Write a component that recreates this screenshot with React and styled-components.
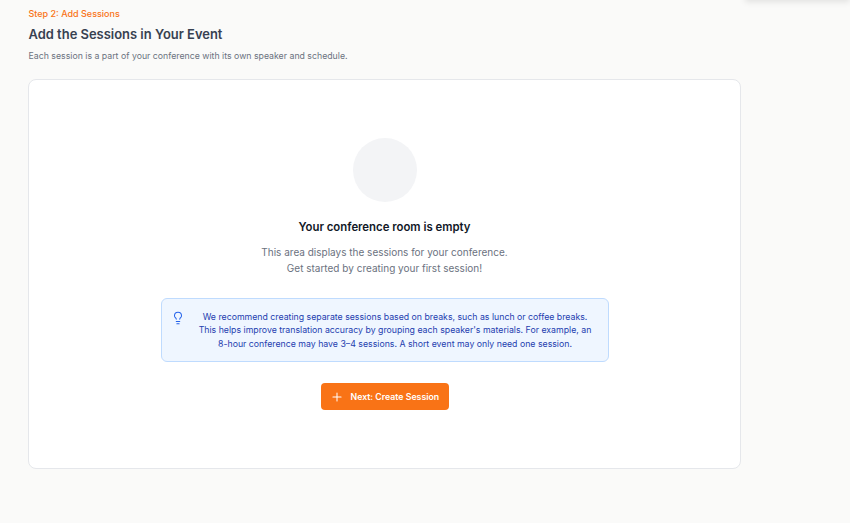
import React from 'react';
import styled, { createGlobalStyle } from 'styled-components';
import { Lightbulb, Plus } from 'lucide-react';

const GlobalStyle = createGlobalStyle`
  html, body {
    margin: 0;
    padding: 0;
    height: 100%;
    background: #fafaf9;
    overflow: hidden;
  }
  * { box-sizing: border-box; }
`;

// Page wrapper
const Page = styled.div`
  position: relative;
  width: 850px;
  height: 523px;
  padding: 8px 109px 0 28px;
  font-family: Inter, "Liberation Sans", sans-serif;
  background: #fafaf9;
  overflow: hidden;
`;

// Corner of a popup that hangs above the window
const TopShadow = styled.div`
  position: absolute;
  top: -20px;
  right: 0;
  width: 105px;
  height: 20px;
  background: #fff;
  box-shadow: 0 2px 6px rgba(0, 0, 0, 0.1);
`;

const HeaderBlock = styled.header`
  padding-left: 0.5px;
`;

const StepLabel = styled.div`
  font-size: 9px;
  line-height: 12px;
  font-weight: 500;
  color: #f97316;
`;

const Heading = styled.h1`
  margin: 6px 0 0;
  font-size: 12.95px;
  line-height: 16px;
  font-weight: 600;
  color: #374151;
`;

const SubHeading = styled.p`
  margin: 8px 0 0;
  font-size: 8.75px;
  line-height: 12px;
  color: #6b7280;
`;

// The big white card
const Card = styled.section`
  display: flex;
  flex-direction: column;
  align-items: center;
  height: 390px;
  margin-top: 17px;
  padding-top: 58px;
  background: #fff;
  border: 1px solid #e5e7eb;
  border-radius: 8px;
`;

const Circle = styled.div`
  width: 64px;
  height: 64px;
  border-radius: 50%;
  background: #f3f4f6;
`;

const EmptyTitle = styled.h2`
  margin: 16px 0 0;
  font-size: 11.375px;
  line-height: 18px;
  font-weight: 600;
  color: #111827;
`;

const EmptyText = styled.p`
  margin: 8px 0 0;
  font-size: 10px;
  line-height: 16px;
  text-align: center;
  color: #6b7280;
`;

// Blue recommendation box
const Notice = styled.div`
  display: flex;
  align-items: flex-start;
  width: 448px;
  height: 64px;
  margin-top: 22px;
  padding: 11.5px 10px 0 9px;
  background: #eff6ff;
  border: 1px solid #bfdbfe;
  border-radius: 6px;
`;

const NoticeIcon = styled(Lightbulb)`
  flex: none;
  width: 14px;
  height: 14px;
  margin-top: 0.5px;
  color: #2563eb;
`;

const NoticeText = styled.p`
  flex: 1;
  margin: 0 0 0 8px;
  font-size: 8.75px;
  line-height: 13.5px;
  text-align: center;
  white-space: nowrap;
  color: #1e40af;
`;

const NextButton = styled.button`
  display: flex;
  align-items: center;
  gap: 7px;
  width: 128px;
  height: 27px;
  margin-top: 21px;
  padding: 0 9px;
  background: #f97316;
  border: 0;
  border-radius: 4px;
  color: #fff;
  font-family: inherit;
  font-size: 8.75px;
  font-weight: 600;
  white-space: nowrap;
`;

const ButtonIcon = styled(Plus)`
  flex: none;
  width: 14px;
  height: 14px;
`;

export default function App() {
  return (
    <Page>
      <GlobalStyle />
      <TopShadow />
      <HeaderBlock>
        <StepLabel>Step 2: Add Sessions</StepLabel>
        <Heading>Add the Sessions in Your Event</Heading>
        <SubHeading>Each session is a part of your conference with its own speaker and schedule.</SubHeading>
      </HeaderBlock>
      <Card>
        <Circle />
        <EmptyTitle>Your conference room is empty</EmptyTitle>
        <EmptyText>
          This area displays the sessions for your conference.
          <br />
          Get started by creating your first session!
        </EmptyText>
        <Notice>
          <NoticeIcon strokeWidth={1.75} />
          <NoticeText>
            We recommend creating separate sessions based on breaks, such as lunch or coffee breaks.
            <br />
            This helps improve translation accuracy by grouping each speaker's materials. For example, an
            <br />
            8-hour conference may have 3–4 sessions. A short event may only need one session.
          </NoticeText>
        </Notice>
        <NextButton>
          <ButtonIcon strokeWidth={1.75} />
          Next: Create Session
        </NextButton>
      </Card>
    </Page>
  );
}
